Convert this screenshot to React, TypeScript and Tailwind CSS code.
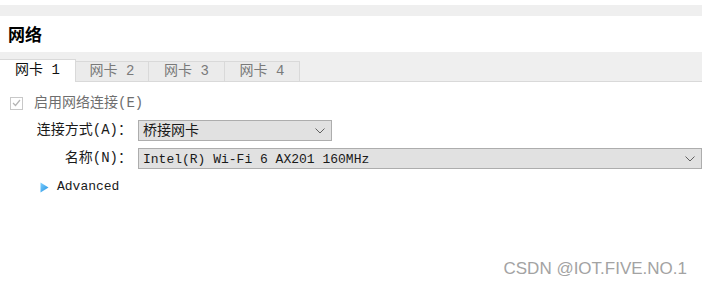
import React from 'react';

const mono = "font-['Liberation_Mono','Noto_Sans_CJK_SC',monospace]";

function Chevron() {
  return (
    <svg width="10" height="6" viewBox="0 0 10 6" className="shrink-0">
      <path d="M0.5 0.5 L5 5 L9.5 0.5" fill="none" stroke="#606060" strokeWidth="1" />
    </svg>
  );
}

function Combo({ children, className }: { children: React.ReactNode; className: string }) {
  return (
    <div className={`flex h-[21px] items-center justify-between border border-[#adadad] bg-[#e1e1e1] pl-[4px] pr-[6px] ${className}`}>
      <span className="leading-none">{children}</span>
      <Chevron />
    </div>
  );
}

export default function App() {
  const tabs = ['网卡 2', '网卡 3', '网卡 4'];
  const widths = ['w-[73px]', 'w-[76px]', 'w-[75px]'];
  return (
    <div className={`relative h-[283px] w-[702px] overflow-hidden bg-white text-[14px] text-[#1a1a1a] ${mono}`}>
      <div className="h-[5px]" />
      <div className="h-[11px] bg-[#efefef]" />

      {/* title */}
      <div className="flex h-[36px] items-center pl-[8px] font-['Noto_Sans_CJK_SC',sans-serif] text-[17px] font-bold text-black">
        网络
      </div>

      {/* tabs */}
      <div className="flex h-[30px] items-end bg-[#efefef]">
        <div className="flex h-[23px] w-[76px] items-center justify-center border-r border-t border-[#d9d9d9] bg-white pb-[1px] text-[#111]">
          网卡 1
        </div>
        {tabs.map((t, i) => (
          <div
            key={t}
            className={`flex h-[21px] ${widths[i]} items-center justify-center border-b border-r border-t border-[#d9d9d9] bg-[#ebebeb] text-[#7a7a7a]`}
          >
            {t}
          </div>
        ))}
        <div className="h-[21px] flex-1 border-b border-[#d9d9d9]" />
      </div>

      {/* body */}
      <div className="pt-[14px]">
        <div className="flex h-[14px] items-center pl-[10px]">
          <div className="flex h-[13px] w-[13px] items-center justify-center border border-[#c8c8c8] bg-white">
            <svg width="9" height="8" viewBox="0 0 9 8">
              <path d="M1 4 L3.5 6.5 L8 1" fill="none" stroke="#b4b4b4" strokeWidth="1.2" />
            </svg>
          </div>
          <span className="ml-[11px] text-[#6e6e6e]">启用网络连接(E)</span>
        </div>

        <div className="mt-[10px] flex items-center">
          <span className="w-[138px] pr-[6px] text-right">连接方式(A)：</span>
          <Combo className="w-[194px]">桥接网卡</Combo>
        </div>

        <div className="mt-[7px] flex items-center">
          <span className="w-[138px] pr-[6px] text-right">名称(N)：</span>
          <Combo className="flex-1">
            <span className="text-[13px]">Intel(R) Wi-Fi 6 AX201 160MHz</span>
          </Combo>
        </div>

        <div className="mt-[11px] flex h-[14px] items-center pl-[40px]">
          <svg width="9" height="11" viewBox="0 0 9 11">
            <defs>
              <linearGradient id="tri" x1="0" y1="0" x2="1" y2="1">
                <stop offset="0" stopColor="#7fd0ff" />
                <stop offset="1" stopColor="#1f8fe0" />
              </linearGradient>
            </defs>
            <path d="M0.5 0.5 L8.5 5.5 L0.5 10.5 Z" fill="url(#tri)" />
          </svg>
          <span className="ml-[8px] text-[13px]">Advanced</span>
        </div>
      </div>

      {/* watermark */}
      <div className="absolute right-[15px] top-[256px] font-['Liberation_Sans',sans-serif] text-[17px] text-[#a3a3a3]">
        CSDN @IOT.FIVE.NO.1
      </div>
    </div>
  );
}
